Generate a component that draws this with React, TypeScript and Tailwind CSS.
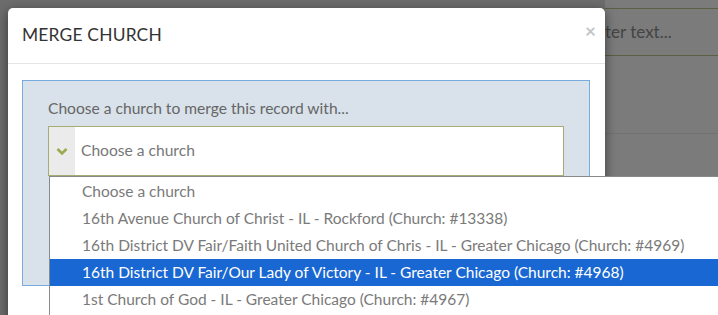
import React from "react";

const items = [
  "Choose a church",
  "16th Avenue Church of Christ - IL - Rockford (Church: #13338)",
  "16th District DV Fair/Faith United Church of Chris - IL - Greater Chicago (Church: #4969)",
  "16th District DV Fair/Our Lady of Victory - IL - Greater Chicago (Church: #4968)",
  "1st Church of God - IL - Greater Chicago (Church: #4967)",
];

export default function App() {
  return (
    <div
      className="relative w-[718px] h-[315px] overflow-hidden bg-[#6d6d6d]"
      style={{ fontFamily: "Lato, 'Open Sans', sans-serif" }}
    >
      {/* background page */}
      <div className="flex h-full">
        <div className="w-[605px] shrink-0" />
        <div className="flex-1 bg-[#7b7b7b] pt-2">
          <div className="h-[48px] border-y border-[#5a6040] flex items-center text-[17px] text-[#444]">
            ter text...
          </div>
          <div className="h-[78px] border-b border-[#727272]" />
        </div>
      </div>

      {/* modal */}
      <div className="absolute left-[8px] top-[8px] w-[597px] h-[340px] bg-white rounded-[5px] shadow-[0_3px_12px_rgba(0,0,0,0.5)]">
        <div className="relative h-[56px] border-b border-[#e5e5e5] pl-[14px] flex items-center">
          <span className="text-[17.4px] text-[#333] tracking-[0.2px]">MERGE CHURCH</span>
          <span className="absolute right-[9px] top-[13px] text-[19px] font-bold text-[#c4c4c4] leading-none">
            ×
          </span>
        </div>
        <div className="pt-[16px] pl-[14px] pr-[15px]">
          <div className="border border-[#77abdd] bg-[#d9e2ea] pt-[17px] pl-[25px] pr-[25px] h-[206px]">
            <div className="text-[15.6px] text-[#666] leading-[20px]">
              Choose a church to merge this record with...
            </div>
            <div className="relative mt-[8px] h-[50px] border border-[#a5ad72] bg-white flex">
              <div className="w-[26px] bg-[#ebebeb] flex items-center justify-center">
                <svg width="12" height="9" viewBox="0 0 12 9">
                  <path d="M1.5 2 L6 6.5 L10.5 2" fill="none" stroke="#9aab4f" strokeWidth="2.6" />
                </svg>
              </div>
              <div className="flex items-center pl-[6px] text-[15.6px] text-[#777]">Choose a church</div>

              {/* dropdown list */}
              <div className="absolute left-0 top-[49px] w-[680px] h-[150px] bg-white border border-[#8a8a8a] z-10 pt-[1px]">
                {items.map((t, i) => (
                  <div
                    key={i}
                    className={
                      "h-[27px] flex items-center pl-[32px] text-[15.5px] whitespace-nowrap " +
                      (i === 3 ? "bg-[#1967d2] text-white" : "text-[#7a7a7a]")
                    }
                  >
                    {t}
                  </div>
                ))}
              </div>
            </div>
          </div>
        </div>
      </div>
    </div>
  );
}
